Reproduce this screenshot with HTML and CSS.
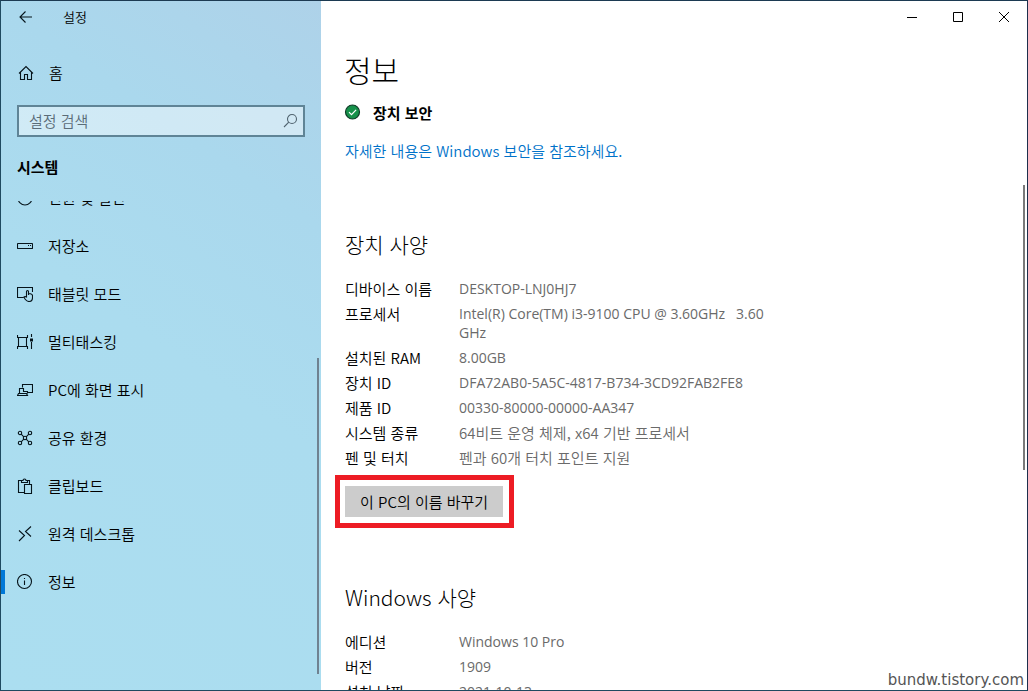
FILE: index.html
```html
<!DOCTYPE html>
<html lang="ko">
<head>
<meta charset="utf-8">
<meta name="viewport" content="width=device-width, initial-scale=1">
<title>설정</title>
<link rel="stylesheet" href="styles.css">
</head>
<body>
<div class="window">
  <aside class="sidebar">
    <header class="app-bar">
      <button class="back" type="button" aria-label="뒤로">
        <svg class="icon" viewBox="0 0 16 16"><path d="M15 8H3M8.500 2.500 3 8l5.500 5.500"/></svg>
      </button>
      <span class="app-name">설정</span>
    </header>
    <a class="nav-link home" href="#home">
      <svg class="icon" viewBox="0 0 16 16"><path d="M1 8.500 8 1.500l7 7M2.500 7.500v7h4v-5h3v5h4v-7"/></svg>
      <span>홈</span>
    </a>
    <form class="search" role="search">
      <input class="search-input" type="text" placeholder="설정 검색" aria-label="설정 검색">
      <button class="search-button" type="button" aria-label="검색">
        <svg class="icon" viewBox="0 0 16 16"><circle cx="10" cy="6" r="4.500"/><path d="M6.800 9.200 2 14"/></svg>
      </button>
    </form>
    <h2 class="category">시스템</h2>
    <nav class="nav" aria-label="시스템">
      <ul class="nav-list">
        <li><a class="nav-link" href="#power">
          <svg class="icon" viewBox="0 0 16 16"><circle cx="8" cy="8" r="7"/></svg>
          <span>전원 및 절전</span></a></li>
        <li><a class="nav-link" href="#storage">
          <svg class="icon" viewBox="0 0 16 16"><rect x=".5" y="5.500" width="15" height="5" rx=".5"/><path d="M11 7.500h1M13 7.500h1"/></svg>
          <span>저장소</span></a></li>
        <li><a class="nav-link" href="#tablet">
          <svg class="icon" viewBox="0 0 16 16"><path d="M6.500 11.500h-6v-10h15v4.500M9.500 11.500V5.500a1 1 0 0 1 2 0V9M11.500 7.500c2 .3 4 .5 4 2v2c0 2.500-1.500 4-3.500 4s-3-1-4-2.500l-1-2c.8-.8 1.600-.5 2.500.5"/></svg>
          <span>태블릿 모드</span></a></li>
        <li><a class="nav-link" href="#multitasking">
          <svg class="icon" viewBox="0 0 16 16"><path d="M0 3.500h11M0 12.500h11M1.500 3.500v9M9.500 3.500v9M.5 1v2.500M10.500 1v2.500M.5 15v-2.500M10.500 15v-2.500M14.500 0v3M14.500 8v7"/><path class="solid" d="M13 4.500h3v3h-3z"/></svg>
          <span>멀티태스킹</span></a></li>
        <li><a class="nav-link" href="#projecting">
          <svg class="icon" viewBox="0 0 16 16"><path d="M5.500 5.500v-3h10v8h-5M2.500 11.500v-5h4v3h4v2M.5 13.500h10l-1-2h-8z"/></svg>
          <span>PC에 화면 표시</span></a></li>
        <li><a class="nav-link" href="#shared">
          <svg class="icon" viewBox="0 0 16 16"><circle cx="3" cy="3" r="1.700"/><circle cx="13" cy="3" r="1.700"/><circle cx="3" cy="13" r="1.700"/><circle cx="13" cy="13" r="1.700"/><circle cx="8" cy="8" r="1.700"/><path d="m4.200 4.200 2.600 2.600M11.800 4.200 9.200 6.800M4.200 11.800l2.600-2.600M11.800 11.800 9.200 9.200"/></svg>
          <span>공유 환경</span></a></li>
        <li><a class="nav-link" href="#clipboard">
          <svg class="icon" viewBox="0 0 16 16"><path d="M7.500 14.500h-6v-12h3v2h6v-2h2v4M4.500 2.500h1.500a1.500 1.500 0 0 1 3 0h1.500M7.500 6.500h7v9h-7z"/></svg>
          <span>클립보드</span></a></li>
        <li><a class="nav-link" href="#remote">
          <svg class="icon" viewBox="0 0 16 16"><path d="M2 4.500 7.500 9.500 2 15M14 .5 8.500 5.500l5.500 5"/></svg>
          <span>원격 데스크톱</span></a></li>
        <li><a class="nav-link current" href="#about" aria-current="page">
          <svg class="icon" viewBox="0 0 16 16"><circle cx="7.500" cy="7.500" r="7"/><path d="M7.500 6.500V11M7.500 4v1"/></svg>
          <span>정보</span></a></li>
      </ul>
    </nav>
    <div class="thumb nav-thumb"></div>
  </aside>

  <main class="main">
    <header class="caption">
      <button class="caption-button" type="button" aria-label="최소화">
        <svg class="glyph" viewBox="0 0 12 12"><path d="M1 6.500h10"/></svg>
      </button>
      <button class="caption-button" type="button" aria-label="최대화">
        <svg class="glyph" viewBox="0 0 12 12"><path d="M1.500 1.500h9v9h-9z"/></svg>
      </button>
      <button class="caption-button" type="button" aria-label="닫기">
        <svg class="glyph" viewBox="0 0 12 12"><path d="m1 1 10 10M11 1 1 11"/></svg>
      </button>
    </header>
    <h1 class="title">정보</h1>
    <div class="content">
      <p class="status">
        <svg class="status-icon" viewBox="0 0 16 16"><circle cx="7.500" cy="7" r="7" fill="#16914a" stroke="#123d2a" stroke-width="1.200"/><path d="m4 7.200 2.500 2.500 4.600-4.900" fill="none" stroke="#fff" stroke-width="1.200"/></svg>
        <strong>장치 보안</strong>
      </p>
      <a class="security-link" href="#security">자세한 내용은 Windows 보안을 참조하세요.</a>

      <section class="section">
        <h2 class="section-title">장치 사양</h2>
        <dl class="specs">
          <dt>디바이스 이름</dt><dd class="latin">DESKTOP-LNJ0HJ7</dd>
          <dt>프로세서</dt><dd class="latin">Intel(R) Core(TM) i3-9100 CPU @ 3.60GHz &nbsp; 3.60 GHz</dd>
          <dt>설치된 RAM</dt><dd class="latin">8.00GB</dd>
          <dt>장치 ID</dt><dd class="latin">DFA72AB0-5A5C-4817-B734-3CD92FAB2FE8</dd>
          <dt>제품 ID</dt><dd class="latin">00330-80000-00000-AA347</dd>
          <dt>시스템 종류</dt><dd>64비트 운영 체제, x64 기반 프로세서</dd>
          <dt>펜 및 터치</dt><dd>펜과 60개 터치 포인트 지원</dd>
        </dl>
        <div class="highlight">
          <button class="rename" type="button">이 PC의 이름 바꾸기</button>
        </div>
      </section>

      <section class="section">
        <h2 class="section-title">Windows 사양</h2>
        <dl class="specs">
          <dt>에디션</dt><dd class="latin">Windows 10 Pro</dd>
          <dt>버전</dt><dd class="latin">1909</dd>
          <dt>설치 날짜</dt><dd class="latin">2021-10-13</dd>
        </dl>
      </section>
    </div>
    <div class="thumb main-thumb"></div>
    <div class="watermark">bundw.tistory.com</div>
  </main>
</div>
</body>
</html>
```
FILE: styles.css
```css
* { box-sizing: border-box; }

body {
  margin: 0;
  color: #000;
  font: 350 15px/20px "Noto Sans CJK KR", sans-serif;
}

button, input { font: inherit; color: inherit; }
button { padding: 0; border: 0; background: none; }
h1, h2, p, dl, dd, ul { margin: 0; padding: 0; }
h1, h2 { font-weight: 300; }
ul { list-style: none; }
a { color: inherit; text-decoration: none; }

.window {
  display: flex;
  height: 100vh;
  overflow: hidden;
  border: 1px solid #1f4a60;
  border-top-color: #1c3a52;
  border-right-color: #1d2f4c;
  background: #fff;
}

.icon {
  flex: none;
  width: 16px;
  height: 16px;
  fill: none;
  stroke: #06141b;
  stroke-width: 1.100;
}
.icon .solid { fill: #06141b; stroke: none; }

/* Sidebar */
.sidebar {
  position: relative;
  display: flex;
  flex: none;
  flex-direction: column;
  width: 320px;
  background: linear-gradient(35deg, #abdef0 0%, #abdcef 50%, #aad8ed 75%, #aed2e9 100%);
}

.app-bar { display: flex; align-items: center; height: 32px; }
.back { display: flex; width: 48px; height: 32px; padding-left: 16px; align-items: center; }
.app-name { padding-left: 14px; font-size: 13px; }

.nav-link {
  display: flex;
  align-items: center;
  gap: 15px;
  height: 48px;
  padding-left: 16px;
}
.home { margin-top: 16px; padding-left: 17px; }

.search {
  display: flex;
  align-items: center;
  height: 32px;
  margin: 8px 16px 0;
  border: 2px solid #5f8496;
  background: rgba(255, 255, 255, .45);
}
.search-input {
  flex: 1;
  min-width: 0;
  padding: 0 10px;
  border: 0;
  outline: 0;
  background: none;
}
.search-input::placeholder { color: #5a6c78; opacity: 1; }
.search-button { display: flex; padding-right: 5px; }
.search-button .icon { stroke: #50636f; }

.category { margin-top: 20px; padding-left: 16px; font-size: 15px; font-weight: 700; }

.nav { flex: 1; min-height: 0; margin-top: 24px; overflow: hidden; }
/* The list is scrolled part of the way through its first row. */
.nav-list { margin-top: -27px; }
.current { position: relative; }
.current::before {
  position: absolute;
  left: 0;
  top: 12px;
  width: 4px;
  height: 24px;
  background: #0078d7;
  content: "";
}

.thumb { position: absolute; width: 2px; background: #7a7a7a; }
.nav-thumb { right: 2px; top: 357px; bottom: 16px; background: #6f8291; }
.main-thumb { right: 2px; top: 184px; height: 285px; }

/* Page */
.main { position: relative; flex: 1; min-width: 0; overflow: hidden; }

.caption { display: flex; justify-content: flex-end; height: 32px; }
.caption-button { display: flex; align-items: center; justify-content: center; width: 46px; }
.glyph { width: 12px; height: 12px; fill: none; stroke: #000; }

.title { margin-top: 16px; padding-left: 23px; font-size: 30px; line-height: 40px; }

.content { padding: 14px 24px 0; }
.status { display: flex; align-items: center; gap: 12px; }
.status-icon { width: 16px; height: 16px; overflow: visible; }
.security-link { display: block; margin-top: 18px; color: #0072c9; }

.section { margin-top: 65px; }
.section-title { font-size: 21px; line-height: 36px; }

.specs {
  display: grid;
  grid-template-columns: 114px minmax(0, 320px);
  row-gap: 6px;
  margin-top: 17px;
  line-height: 19px;
}
.specs dd { color: #6a6a6a; }
.specs .latin { font-family: "Open Sans", "Noto Sans CJK KR", sans-serif; font-size: 14px; font-weight: 400; }

.highlight { position: relative; width: fit-content; margin-top: 19px; }
.highlight::after {
  position: absolute;
  inset: -11px -11px -11px -10px;
  border: 5px solid #ed1c24;
  pointer-events: none;
  content: "";
}
.rename { display: block; height: 31px; padding: 0 15px; background: #ccc; }
.section + .section { margin-top: 62px; }

.watermark {
  position: absolute;
  right: 3px;
  bottom: 0;
  color: #555;
  font: 15px/20px "DejaVu Sans", sans-serif;
  text-shadow: 0 0 2px #fff;
}
```
